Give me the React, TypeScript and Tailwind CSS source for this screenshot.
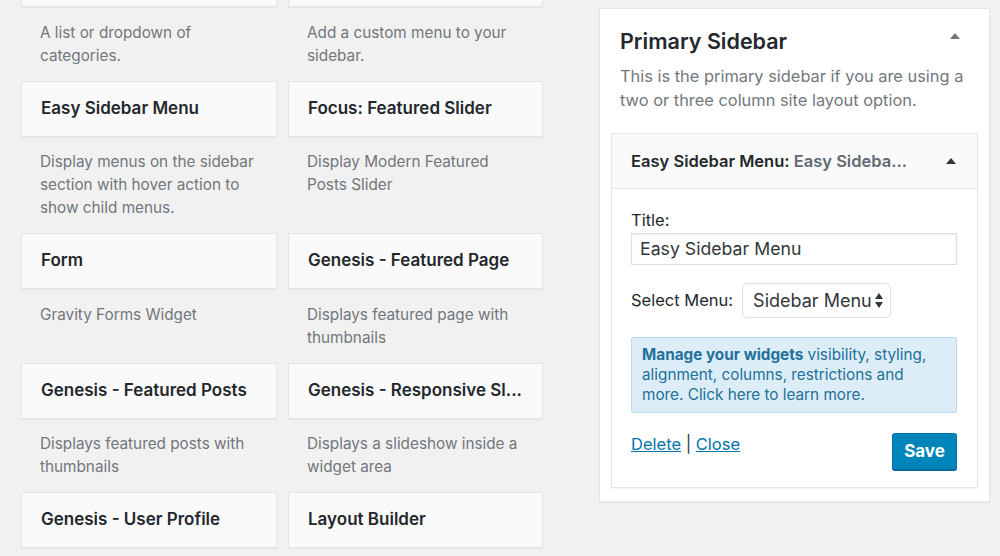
import React from "react";

const font = { fontFamily: "Inter, 'Noto Sans', sans-serif" };

type W = { title: string; desc: string[] };

const widgets: W[] = [
  { title: "", desc: ["A list or dropdown of", "categories."] },
  { title: "", desc: ["Add a custom menu to your", "sidebar."] },
  { title: "Easy Sidebar Menu", desc: ["Display menus on the sidebar", "section with hover action to", "show child menus."] },
  { title: "Focus: Featured Slider", desc: ["Display Modern Featured", "Posts Slider"] },
  { title: "Form", desc: ["Gravity Forms Widget"] },
  { title: "Genesis - Featured Page", desc: ["Displays featured page with", "thumbnails"] },
  { title: "Genesis - Featured Posts", desc: ["Displays featured posts with", "thumbnails"] },
  { title: "Genesis - Responsive Sl...", desc: ["Displays a slideshow inside a", "widget area"] },
  { title: "Genesis - User Profile", desc: [] },
  { title: "Layout Builder", desc: [] },
];

function Card({ w }: { w: W }) {
  return (
    <div className="flex flex-col">
      <div className="h-[56px] flex items-center px-[19px] border border-[#e5e5e5] bg-[#fafafa] shadow-[0_1px_1px_rgba(0,0,0,0.04)] text-[17px] font-semibold text-[#23282d] whitespace-nowrap">
        {w.title}
      </div>
      {w.desc.length > 0 && (
        <div className="pt-[13.5px] pb-[14px] px-[19px] text-[15.3px] leading-[23px] text-[#72777c]">
          {w.desc.map((l, i) => (
            <div key={i} className="whitespace-nowrap">{l}</div>
          ))}
        </div>
      )}
    </div>
  );
}

function Tri({ className }: { className: string }) {
  return (
    <svg width="10" height="6" viewBox="0 0 10 6" className={className}>
      <path d="M0 6 L5 0 L10 6 Z" fill="currentColor" />
    </svg>
  );
}

export default function App() {
  return (
    <div style={font} className="w-[1000px] h-[556px] overflow-hidden bg-[#f1f1f1] flex items-start">
      <div className="ml-[21px] -mt-[49px] w-[522px] grid grid-cols-[256px_255px] gap-x-[11px] content-start">
        {widgets.map((w, i) => (
          <Card key={i} w={w} />
        ))}
      </div>

      <div className="ml-[56px] mt-[8px] w-[391px] bg-white border border-[#e5e5e5] shadow-[0_1px_1px_rgba(0,0,0,0.04)] pb-[13px]">
        <div className="pl-[20px] pr-[29px] pt-[18px] flex items-center justify-between">
          <h2 className="text-[21.5px] leading-[28px] font-semibold text-[#23282d]">Primary Sidebar</h2>
          <Tri className="text-[#72777c] -mt-[10px]" />
        </div>
        <p className="mt-[9px] pl-[20px] text-[16.4px] leading-[24px] text-[#72777c] whitespace-nowrap">
          This is the primary sidebar if you are using a<br />two or three column site layout option.
        </p>
        <div className="mx-[11px] mt-[21px] border border-[#e5e5e5] shadow-[0_1px_1px_rgba(0,0,0,0.04)]">
          <div className="h-[55px] bg-[#fafafa] border-b border-[#e5e5e5] flex items-center justify-between pl-[19px] pr-[21px] text-[16.5px] font-semibold">
            <span className="text-[#23282d] whitespace-nowrap">
              Easy Sidebar Menu: <span className="text-[#606a73]">Easy Sideba...</span>
            </span>
            <Tri className="text-[#32373c]" />
          </div>
          <div className="bg-white pl-[19px] pr-[20px] pt-[21px] pb-[17px] text-[#23282d]">
            <label className="block text-[16.5px] leading-[20px]">Title:</label>
            <div className="mt-[3px] h-[32px] border border-[#dddddd] shadow-[inset_0_1px_2px_rgba(0,0,0,0.07)] flex items-center pl-[8px] text-[17.7px] text-[#32373c]">
              Easy Sidebar Menu
            </div>
            <div className="mt-[18px] flex items-center gap-[9px]">
              <span className="text-[16.5px]">Select Menu:</span>
              <div className="h-[35px] w-[149px] border border-[#dddddd] rounded-[5px] flex items-center justify-between pl-[10px] pr-[7px] text-[18px] text-[#32373c] bg-white">
                <span>Sidebar Menu</span>
                <svg width="8" height="15" viewBox="0 0 8 15">
                  <path d="M0 6 L4 0 L8 6 Z M0 9 L4 15 L8 9 Z" fill="#32373c" />
                </svg>
              </div>
            </div>
            <div className="mt-[19px] h-[76px] bg-[#dcedf7] border border-[#b7ddf0] rounded-[2px] px-[10px] pt-[7px] text-[15.3px] leading-[20px] text-[#23709a] whitespace-nowrap">
              <b className="font-bold">Manage your widgets</b> visibility, styling,<br />
              alignment, columns, restrictions and<br />
              more. Click here to learn more.
            </div>
            <div className="mt-[20px] flex items-start justify-between">
              <div className="mt-[1px] text-[16.5px] leading-[20px] text-[#32373c]">
                <a className="text-[#0073aa] underline">Delete</a> | <a className="text-[#0073aa] underline">Close</a>
              </div>
              <button className="h-[37px] w-[65px] rounded-[3px] bg-[#0085ba] border border-[#0073aa] border-b-[#006799] shadow-[0_1px_0_#006799] text-white font-bold text-[17px]">
                Save
              </button>
            </div>
          </div>
        </div>
      </div>
    </div>
  );
}
